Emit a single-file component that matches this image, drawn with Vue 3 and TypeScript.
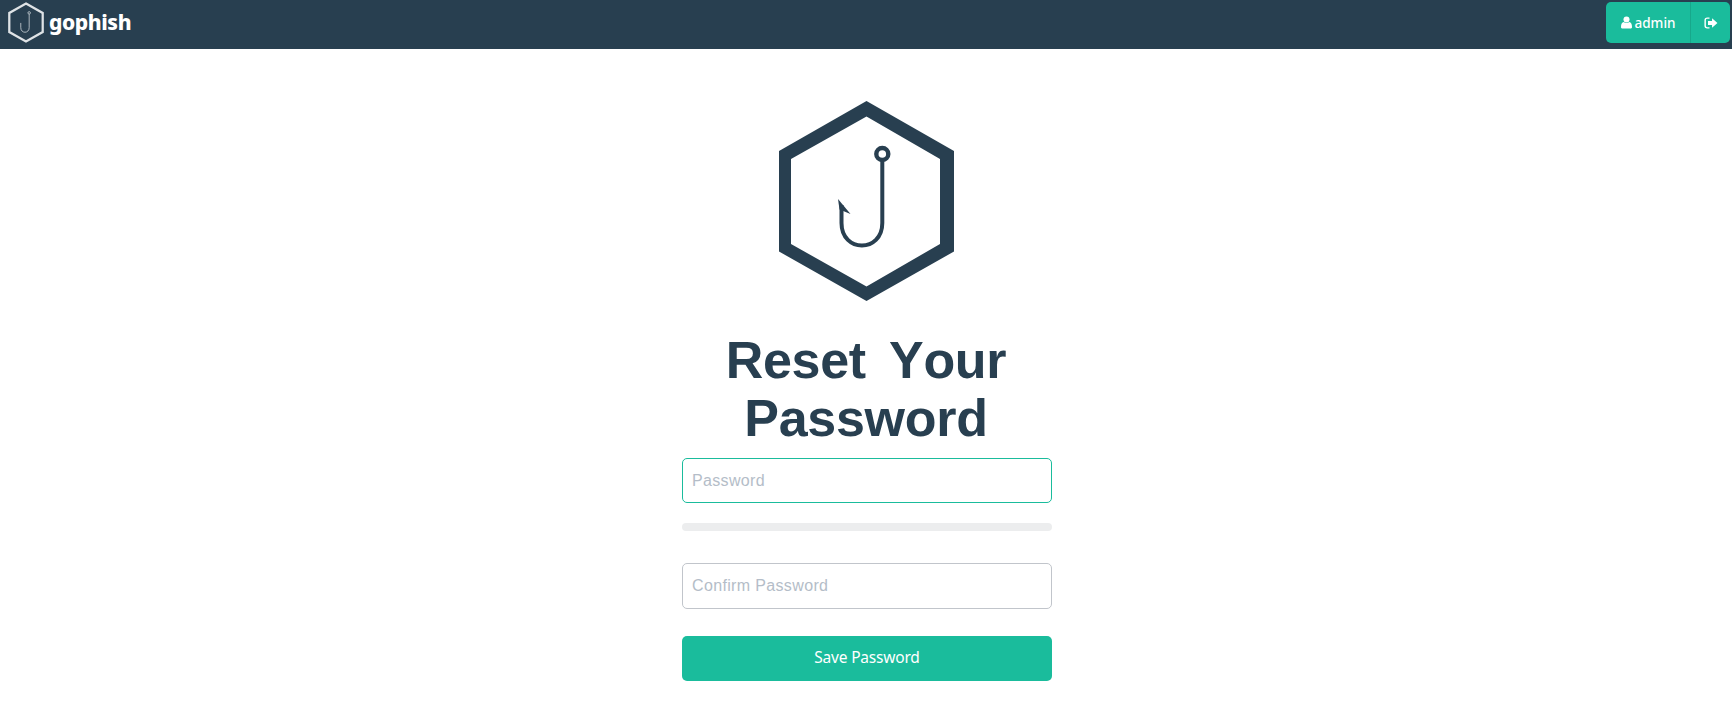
<script setup lang="ts">
import {ref} from "vue"

const password = ref("")
const confirmPassword = ref("")
</script>

<template>
  <nav class="navbar">
    <a class="brand">
      <svg class="brand-logo" viewBox="0 0 175 200" width="36" height="41">
        <path class="hex" d="M87.5 7 L169 53.5 V146.5 L87.5 193 L6 146.5 V53.5 Z" />
        <circle class="hook-line" cx="103" cy="53" r="6" />
        <path class="hook-line" d="M103 59 V125 C103 155 62 155 62 125 V102" />
      </svg>
      <span class="brand-name">gophish</span>
    </a>
    <div class="user-group">
      <button class="user-btn">
        <svg viewBox="0 0 16 18" width="11" height="13">
          <circle cx="8" cy="4.6" r="4.4" fill="#fff" />
          <path d="M1.6 17.6 C0.4 17.6 0 16.8 0 15.6 C0 11.6 1.4 8.6 4 8.4 C5 9.2 6.4 9.8 8 9.8 C9.6 9.8 11 9.2 12 8.4 C14.6 8.6 16 11.6 16 15.6 C16 16.8 15.6 17.6 14.4 17.6 Z" fill="#fff" />
        </svg>
        admin
      </button>
      <button class="logout-btn">
        <svg viewBox="0 0 18 16" width="14" height="12">
          <path d="M7 1.5 H4 C2.2 1.5 1.2 2.6 1.2 4.2 V11.8 C1.2 13.4 2.2 14.5 4 14.5 H7" fill="none" stroke="#fff" stroke-width="1.9" />
          <path d="M10.4 1.6 L17.6 8 L10.4 14.4 V10.8 H5 V5.2 H10.4 Z" fill="#fff" />
        </svg>
      </button>
    </div>
  </nav>

  <main class="page">
    <svg class="logo" viewBox="0 0 175 200" width="175" height="200">
      <path d="M87.5 0 L175 50 V150.5 L87.5 200 L0 150.5 V50 Z M87.5 15.5 L12 58 V143 L87.5 185.5 L161 143 V58 Z" fill="#283f50" fill-rule="evenodd" />
      <circle cx="103.3" cy="53" r="6" fill="none" stroke="#283f50" stroke-width="4.4" />
      <path d="M103.3 59 V122 C103.3 152 62.5 152 62.5 122 V104" fill="none" stroke="#283f50" stroke-width="4" />
      <path d="M59 98 L71.5 113 L60.5 108.5 Z" fill="#283f50" />
    </svg>
    <h1 class="title">Reset Your Password</h1>
    <form class="form" @submit.prevent>
      <input v-model="password" class="field field-active" type="password" placeholder="Password" />
      <div class="strength"></div>
      <input v-model="confirmPassword" class="field field-confirm" type="password" placeholder="Confirm Password" />
      <button class="save-btn" type="submit">Save Password</button>
    </form>
  </main>
</template>

<style scoped>
.navbar {
  display: flex;
  justify-content: space-between;
  height: 49px;
  background-color: #283f50;
  padding: 2px 2px 0 8px;
  box-sizing: border-box;
}

.brand {
  display: flex;
  align-items: center;
  gap: 5px;
  height: 40px;
}

.brand-logo {
  flex-shrink: 0;
}

.brand-logo .hex {
  fill: none;
  stroke: #dfe3e6;
  stroke-width: 11;
}

.brand-logo .hook-line {
  fill: none;
  stroke: #c9d0d5;
  stroke-width: 4;
}

.brand-name {
  color: #fff;
  font-family: "Noto Sans", sans-serif;
  font-weight: 800;
  font-size: 21px;
  letter-spacing: -0.4px;
  line-height: 40px;
}

.user-group {
  display: flex;
  height: 41px;
}

.user-btn,
.logout-btn {
  display: flex;
  align-items: center;
  justify-content: center;
  border: none;
  background-color: #1abc9c;
  color: #fff;
  font-family: "Noto Sans", sans-serif;
  font-size: 13.5px;
  font-weight: 500;
  padding: 0;
}

.user-btn {
  width: 85px;
  gap: 3px;
  border-radius: 5px 0 0 5px;
  border-right: 1px solid #17a88b;
}

.logout-btn {
  width: 39px;
  border-radius: 0 5px 5px 0;
}

.page {
  display: flex;
  flex-direction: column;
  align-items: center;
  padding-top: 52px;
}

.logo {
  display: block;
}

.title {
  width: 370px;
  margin: 30px 0 0;
  color: #283f50;
  font-family: "Liberation Sans", Arial, sans-serif;
  font-size: 52px;
  font-weight: 700;
  font-kerning: none;
  line-height: 58px;
  letter-spacing: -0.3px;
  word-spacing: 9px;
  text-align: center;
}

.form {
  display: flex;
  flex-direction: column;
  width: 370px;
  margin: 11px 0 0 2px;
}

.field {
  height: 45px;
  box-sizing: border-box;
  padding: 0 9px;
  border: 1px solid #c1c5cb;
  border-radius: 5px;
  background: #fff;
  outline: none;
  font-family: "Liberation Sans", Arial, sans-serif;
  font-size: 16px;
  letter-spacing: 0.35px;
  color: #283f50;
}

.field::placeholder {
  color: #b4bdc8;
  opacity: 1;
}

.field-active {
  border-color: #1abc9c;
}

.field-confirm {
  height: 46px;
}

.strength {
  height: 8px;
  margin: 20px 0 32px;
  border-radius: 4px;
  background-color: #ecedee;
}

.save-btn {
  height: 45px;
  margin-top: 27px;
  padding: 0 0 3px;
  border: none;
  border-radius: 5px;
  background-color: #1abc9c;
  color: #fff;
  font-family: "Noto Sans", sans-serif;
  font-size: 15.5px;
  letter-spacing: -0.2px;
  font-weight: 400;
}
</style>
